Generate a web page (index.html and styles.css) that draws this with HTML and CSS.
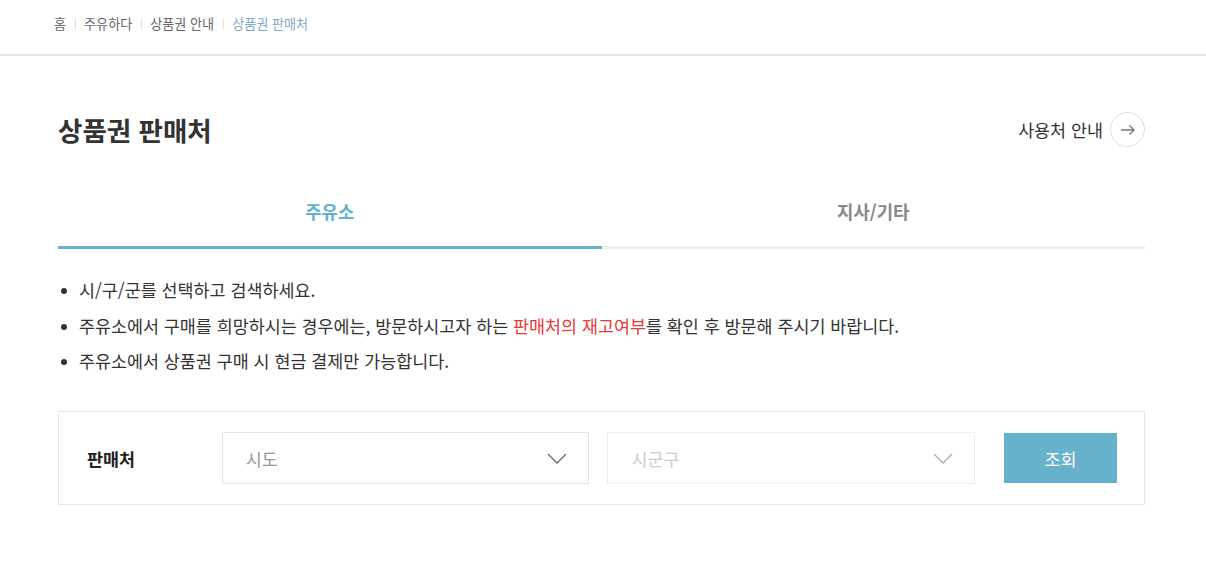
FILE: index.html
```html
<!DOCTYPE html>
<html lang="ko">
<head>
<meta charset="utf-8">
<title>상품권 판매처</title>
<link rel="stylesheet" href="styles.css">
</head>
<body>
<header class="crumbs">
  <nav class="crumb-list">
    <span class="crumb">홈</span><span class="sep"></span>
    <span class="crumb">주유하다</span><span class="sep"></span>
    <span class="crumb">상품권 안내</span><span class="sep"></span>
    <span class="crumb current">상품권 판매처</span>
  </nav>
</header>
<main class="content">
  <div class="title-row">
    <h1 class="title">상품권 판매처</h1>
    <a class="guide-link">사용처 안내
      <span class="circle">
        <svg width="16" height="12" viewBox="0 0 16 12"><path d="M1 6H14M9.5 1.5L14 6L9.5 10.5" fill="none" stroke="#777" stroke-width="1.4"/></svg>
      </span>
    </a>
  </div>
  <div class="tabs">
    <div class="tab active">주유소</div>
    <div class="tab">지사/기타</div>
  </div>
  <ul class="notes">
    <li>시/구/군를 선택하고 검색하세요.</li>
    <li>주유소에서 구매를 희망하시는 경우에는, 방문하시고자 하는 <span class="red">판매처의 재고여부</span>를 확인 후 방문해 주시기 바랍니다.</li>
    <li>주유소에서 상품권 구매 시 현금 결제만 가능합니다.</li>
  </ul>
  <div class="search">
    <div class="label">판매처</div>
    <div class="select">
      <span>시도</span>
      <svg class="chev" width="20" height="11" viewBox="0 0 20 11"><path d="M1 1L10 10L19 1" fill="none" stroke="#666" stroke-width="1.3"/></svg>
    </div>
    <div class="select disabled">
      <span>시군구</span>
      <svg class="chev" width="20" height="11" viewBox="0 0 20 11"><path d="M1 1L10 10L19 1" fill="none" stroke="#aaa" stroke-width="1.3"/></svg>
    </div>
    <button class="btn">조회</button>
  </div>
</main>
</body>
</html>
```

FILE: styles.css
```css
* { box-sizing: border-box; }
body {
  margin: 0;
  font-family: "Noto Sans CJK KR", "Noto Sans", sans-serif;
  color: #333;
  background: #fff;
}
.crumbs {
  height: 56px;
  border-bottom: 2px solid #e6e6e6;
}
.crumb-list {
  display: flex;
  align-items: center;
  padding: 14px 0 0 54px;
  height: 20px;
  box-sizing: content-box;
  font-size: 13.1px;
  line-height: 20px;
}
.crumb { color: #666; }
.crumb.current { color: #7fa9c4; }
.sep {
  width: 1px;
  height: 10px;
  background: #ddd;
  margin: 0 8.5px;
}
.content {
  width: 1087px;
  margin-left: 58px;
}
.title-row {
  display: flex;
  justify-content: space-between;
  align-items: center;
  height: 35px;
  margin-top: 56px;
}
.title {
  margin: 0;
  font-size: 26.5px;
  font-weight: 700;
  line-height: 35px;
  color: #333;
}
.guide-link {
  display: flex;
  align-items: center;
  gap: 7px;
  font-size: 17.4px;
  color: #333;
}
.circle {
  width: 35px;
  height: 35px;
  border: 1px solid #ddd;
  border-radius: 50%;
  display: flex;
  align-items: center;
  justify-content: center;
}
.tabs {
  display: flex;
  margin-top: 38px;
}
.tab {
  flex: 1;
  text-align: center;
  font-size: 17.8px;
  font-weight: 700;
  line-height: 24px;
  padding: 14px 0 23px;
  color: #888;
  border-bottom: 3px solid #eee;
}
.tab.active {
  color: #66b2cc;
  border-bottom-color: #66b2cc;
}
.notes {
  list-style: none;
  margin: 29px 0 0;
  padding: 0;
}
.notes li {
  position: relative;
  padding-left: 21px;
  font-size: 17.4px;
  line-height: 24px;
  margin-bottom: 11.5px;
  color: #333;
}
.notes li::before {
  content: "";
  position: absolute;
  left: 3px;
  top: 10px;
  width: 6px;
  height: 6px;
  border-radius: 50%;
  background: #333;
}
.red { color: #e53935; }
.search {
  display: flex;
  align-items: center;
  margin-top: 38px;
  border: 1px solid #e6e6e6;
  height: 94px;
  padding: 0 27px 0 28px;
}
.label {
  width: 135px;
  font-size: 17.4px;
  font-weight: 700;
  color: #222;
}
.select {
  width: 368px;
  height: 52px;
  border: 1px solid #e3e3e3;
  display: flex;
  align-items: center;
  justify-content: space-between;
  padding: 0 21px 0 23px;
  font-size: 17.4px;
  color: #999;
  margin-right: 18px;
}
.select.disabled {
  border-color: #eee;
  color: #ccc;
  margin-right: 29px;
}
.btn {
  width: 113px;
  height: 50px;
  border: 0;
  background: #66b2cc;
  color: #fff;
  font-family: inherit;
  font-size: 17.4px;
}
```
